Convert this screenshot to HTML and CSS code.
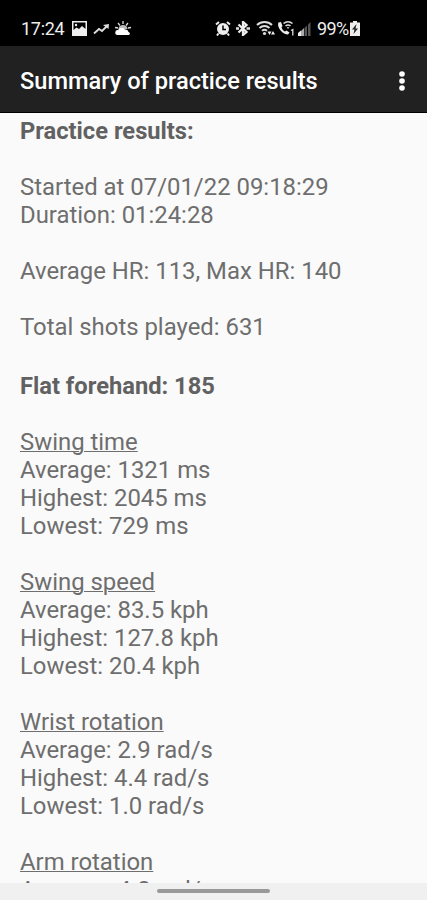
FILE: index.html
```html
<!DOCTYPE html>
<html lang="en">
<head>
    <meta charset="UTF-8">
    <meta name="viewport" content="width=device-width, initial-scale=1.0">
    <title>Summary of practice results</title>
    <link rel="stylesheet" href="styles.css">
</head>
<body>
    <div class="status-bar">
        <span class="clock">17:24</span>
        <svg class="icon-picture" width="15" height="15" viewBox="0 0 15 15">
            <path fill="#eee" fill-rule="evenodd" d="M0 0h15v15H0zM1.500 1.500v7.500l3-2.500 2.500 1.500 3-3 3.500 3v-6.500z"/>
            <circle cx="4" cy="4" r="1.200" fill="#eee"/>
        </svg>
        <svg class="icon-trend" width="17" height="12" viewBox="0 0 17 12">
            <path d="M1 10.500l5-4.500 3 2 5-5" fill="none" stroke="#ddd" stroke-width="1.800"/>
            <path d="M10 2l6-1-.5 5z" fill="#ddd"/>
        </svg>
        <svg class="icon-weather" width="16" height="15" viewBox="0 0 16 15">
            <path d="M8 0v3M3 2l2 2.500M13 2l-2 2.500M0 6.500l3 .5M16 6.500l-3 .5" stroke="#ddd" stroke-width="1.300"/>
            <path d="M3.500 8a4.500 4 0 0 1 9 0z" fill="#bbb"/>
            <path d="M2.500 14a2.500 2.500 0 0 1 .5-5 4 4 0 0 1 7-.5 3 3 0 0 1 3.500 2.500 1.600 1.600 0 0 1 .5 3z" fill="#fff"/>
        </svg>
        <div class="status-right">
            <svg width="16" height="15" viewBox="0 0 16 15">
                <path d="M1 3.500l3-2.500M15 3.500L12 1M3.500 12.500L2 14.500M12.500 12.500l1.500 2" stroke="#eee" stroke-width="2"/>
                <circle cx="8" cy="8" r="6" fill="#eee"/>
                <path d="M8 4.500V8.500h3" fill="none" stroke="#000" stroke-width="1.500"/>
            </svg>
            <svg class="icon-bluetooth" width="14" height="15" viewBox="0 0 14 15">
                <path d="M2.500 3.500l8 7.500L7 14V1l3.500 3-8 7.500" fill="none" stroke="#eee" stroke-width="2.300"/>
                <path d="M0 7.500h3M10.500 7.500H14" stroke="#ddd" stroke-width="2.600"/>
            </svg>
            <svg class="icon-wifi" width="20" height="15" viewBox="0 0 20 15">
                <path d="M1 4a11 11 0 0 1 15 0M3.500 7a7.500 7.500 0 0 1 10 0M6 9.800a4 4 0 0 1 5 0" fill="none" stroke="#ddd" stroke-width="2"/>
                <circle cx="8.500" cy="12.500" r="1.600" fill="#ddd"/>
                <path d="M11.500 10.500h4L13.500 14zM15 13.500l2-3.500 2 3.500z" fill="#eee"/>
            </svg>
            <svg class="icon-call" width="18" height="15" viewBox="0 0 18 15">
                <path d="M1.500 1.500c-2 4 3.500 12 9.500 12l1.500-2-3-2-1.500 1c-2-1-3-2.500-3.500-4l1-1.500-1.500-4z" fill="#eee"/>
                <path d="M6.500 2.500a7 7 0 0 1 9 0M8.500 5a4 4 0 0 1 5 0" fill="none" stroke="#ddd" stroke-width="1.600"/>
                <path d="M9.800 6.300h2.500L11 8z" fill="#eee"/>
                <path d="M14 9.500l1.800-1V14.500" fill="none" stroke="#ddd" stroke-width="1.300"/>
            </svg>
            <svg class="icon-signal" width="13" height="14" viewBox="0 0 13 14">
                <path d="M0 14v-3l3-2.500V14z" fill="#eee"/>
                <path d="M3 14V9l3-3v8z" fill="#aaa"/>
                <path d="M6.500 14V6L9 3.500V14zM10 14V2.500L12.500 0v14z" fill="#555"/>
            </svg>
            <span class="battery-level">99%</span>
            <svg class="icon-battery" width="10" height="15" viewBox="0 0 10 15">
                <path d="M3 0h4v1.500h3V15H0V1.500h3z" fill="#eee"/>
                <path d="M6.500 3L2 8.500h2.500L3.500 13 8 7.500H5.500z" fill="#222"/>
            </svg>
        </div>
    </div>

    <header class="toolbar">
        <h1>Summary of practice results</h1>
        <svg class="menu" width="8" height="22" viewBox="0 0 8 22">
            <g fill="#fff">
                <circle cx="4" cy="4" r="2.800"/>
                <circle cx="4" cy="11" r="2.800"/>
                <circle cx="4" cy="18" r="2.800"/>
            </g>
        </svg>
    </header>

    <main class="results">
        <h2>Practice results:</h2>
        <p>Started at 07/01/22 09:18:29<br>Duration: 01:24:28</p>
        <p>Average HR: 113, Max HR: 140</p>
        <p>Total shots played: 631</p>

        <h2 class="shot-type">Flat forehand: 185</h2>
        <p><u>Swing time</u><br>Average: 1321 ms<br>Highest: 2045 ms<br>Lowest: 729 ms</p>
        <p><u>Swing speed</u><br>Average: 83.5 kph<br>Highest: 127.8 kph<br>Lowest: 20.4 kph</p>
        <p><u>Wrist rotation</u><br>Average: 2.9 rad/s<br>Highest: 4.4 rad/s<br>Lowest: 1.0 rad/s</p>
        <p><u>Arm rotation</u><br>Average: 4.8 rad/s</p>
    </main>

    <footer class="nav-bar">
        <div class="handle"></div>
    </footer>
</body>
</html>
```
FILE: styles.css
```css
* {
    box-sizing: border-box;
}
body {
    margin: 0;
    height: 900px;
    display: flex;
    flex-direction: column;
    overflow: hidden;
    background-color: #fafafa;
    font-family: Roboto, sans-serif;
}
.status-bar {
    flex: none;
    height: 46px;
    padding: 11px 67px 0 21px;
    display: flex;
    align-items: center;
    background-color: #000;
    color: #eee;
    font-size: 18px;
}
.clock {
    width: 45px;
    margin-right: 6px;
    letter-spacing: -0.3px;
}
.icon-trend {
    margin-left: 6px;
}
.icon-weather {
    margin-left: 5px;
}
.status-right {
    margin-left: auto;
    display: flex;
    align-items: center;
}
.icon-bluetooth {
    margin-left: 5px;
}
.icon-wifi {
    margin-left: 6px;
}
.icon-call {
    margin-left: 1px;
}
.icon-signal {
    margin-left: 3px;
}
.battery-level {
    width: 33px;
    margin-left: 6px;
    letter-spacing: -0.6px;
}
.icon-battery {
    position: relative;
}
.toolbar {
    flex: none;
    height: 67px;
    padding: 3px 21px 0 20px;
    display: flex;
    align-items: center;
    justify-content: space-between;
    background-color: #212121;
    border-bottom: 1px solid #000;
    color: #fff;
}
.toolbar h1 {
    margin: 0;
    font-size: 23.6px;
    font-weight: 500;
}
.results {
    flex: 1;
    min-height: 0;
    padding: 4px 20px 0;
    overflow: hidden;
    color: #6e6e6e;
    font-size: 23.9px;
    font-weight: 400;
    line-height: 28px;
    white-space: nowrap;
}
.results h2 {
    margin: 0 0 28px;
    color: #616161;
    font-size: 23.7px;
    font-weight: 700;
}
.results p {
    margin: 0 0 28px;
}
.results .shot-type {
    padding-top: 3px;
}
.results u {
    text-decoration-thickness: 1px;
}
.nav-bar {
    flex: none;
    height: 17px;
    padding-top: 6px;
    background-color: #f0f0f0;
}
.handle {
    width: 113px;
    height: 4px;
    margin: 0 auto;
    border-radius: 2px;
    background-color: #999;
}
```
